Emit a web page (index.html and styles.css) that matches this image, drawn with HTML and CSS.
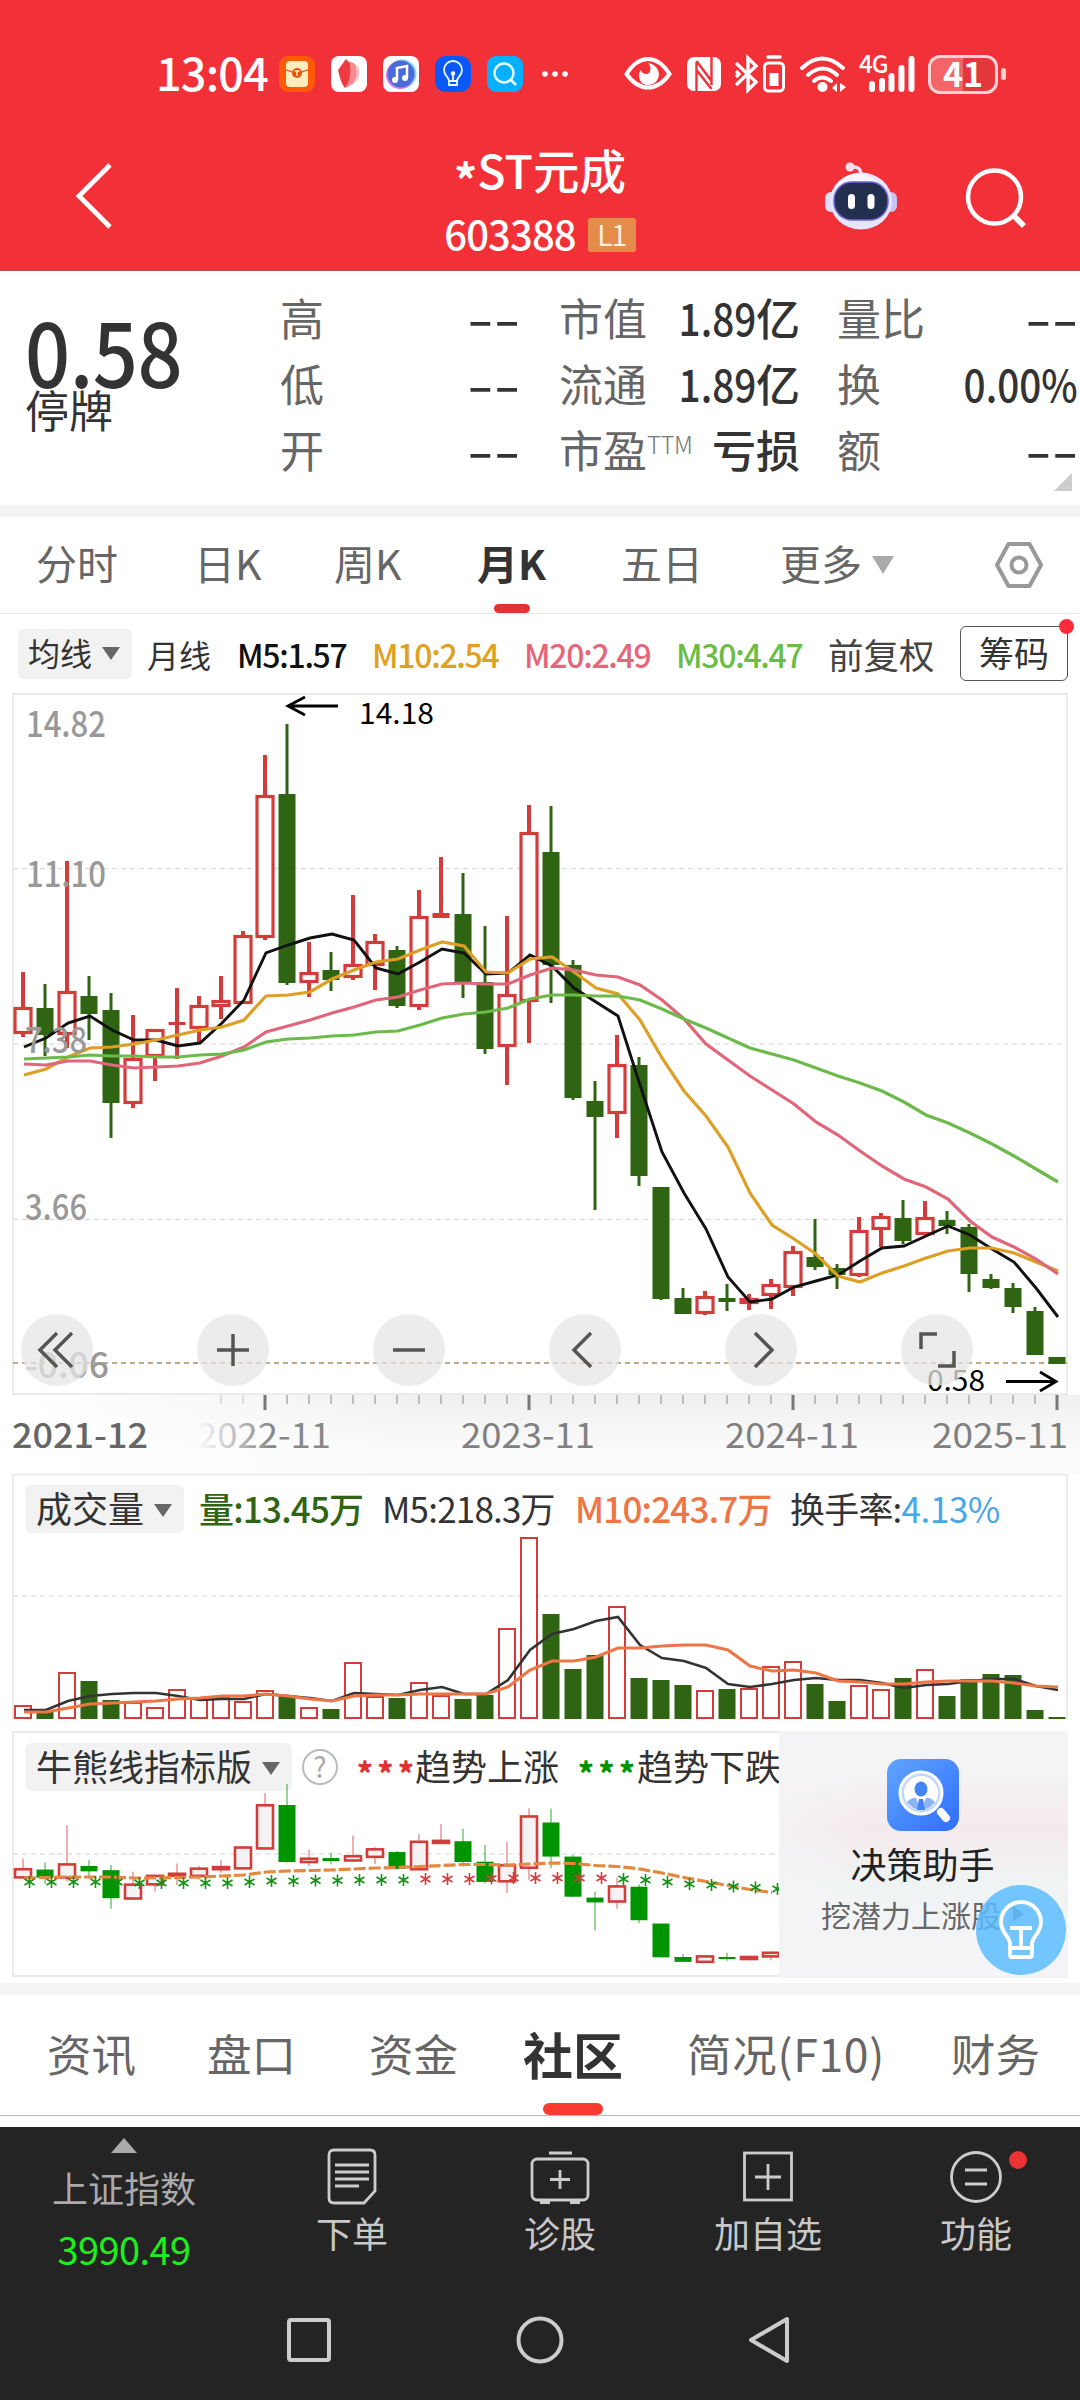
FILE: index.html
```html
<!DOCTYPE html>
<html lang="zh-CN">
<head>
    <meta charset="UTF-8">
    <title>*ST元成 603388</title>
    <link rel="stylesheet" href="styles.css">
</head>
<body>
    <!-- barre d'état + titre -->
    <header class="header">
        <div class="status">
            <span class="time">13:04</span>
            <div class="apps">
                <svg width="36" height="36" viewBox="0 0 36 36">
                    <rect width="36" height="36" rx="9" fill="#ff5a0a"/>
                    <rect x="7" y="5" width="22" height="26" rx="4" fill="#ffeebb"/>
                    <path d="M7 14c5 1 7 3 11 3s6-2 11-3" fill="none" stroke="#e8641c" stroke-width="1.5"/>
                    <circle cx="18" cy="17" r="5" fill="#e8520c"/>
                    <path d="M15.500 15h5M18 15v5" stroke="#ffeebb" stroke-width="1.500"/>
                </svg>
                <svg width="36" height="36" viewBox="0 0 36 36">
                    <rect width="36" height="36" rx="8" fill="#fff"/>
                    <path d="M22 7l5 3q6 16-13 22l-2-20z" fill="#fcc9cb"/>
                    <path d="M18 5l6 3q6 18-10 24l-3-20z" fill="#f88b90"/>
                    <path d="M15 3l4 5q2 14-5 24-4-4-7-18z" fill="#ee3b42"/>
                </svg>
                <svg width="36" height="36" viewBox="0 0 36 36">
                    <rect width="36" height="36" rx="8" fill="#fff"/>
                    <circle cx="19" cy="18" r="14.500" fill="#7fd7f5"/>
                    <circle cx="17" cy="19" r="14" fill="#e07ae6"/>
                    <circle cx="18" cy="18" r="13.500" fill="#4b6bd8"/>
                    <path d="M14 24V12l10-2v12" fill="none" stroke="#fff" stroke-width="2.500"/>
                    <circle cx="12" cy="24" r="3" fill="#fff"/><circle cx="22" cy="22" r="3" fill="#fff"/>
                </svg>
                <svg width="36" height="36" viewBox="0 0 36 36">
                    <rect width="36" height="36" rx="11" fill="#0a58f5"/>
                    <path d="M14 25c0-4-5-5-5-11a9 9 0 0 1 18 0c0 6-5 7-5 11zM14 25v4h8v-4M18 25v-7" fill="none" stroke="#e8fbff" stroke-width="1.800"/>
                    <circle cx="18" cy="17.500" r="2.200" fill="#fff"/>
                </svg>
                <svg width="36" height="36" viewBox="0 0 36 36">
                    <rect width="36" height="36" rx="9" fill="#07b0ff"/>
                    <circle cx="17" cy="17" r="9.500" fill="none" stroke="#e8ffff" stroke-width="2.400"/>
                    <path d="M24 24l5 5" stroke="#e8ffff" stroke-width="2.600"/>
                </svg>
            </div>
            <svg class="more" width="28" height="8" viewBox="0 0 28 8" fill="#fff">
                <circle cx="4" cy="4" r="2.800"/><circle cx="14" cy="4" r="2.800"/><circle cx="24" cy="4" r="2.800"/>
            </svg>
            <svg class="eye" width="48" height="36" viewBox="0 0 48 36">
                <path d="M2.500 18Q12 3 24 3t21.500 15Q36 31.500 24 31.500T2.500 18z" fill="none" stroke="#fff" stroke-width="4"/>
                <path d="M24 7c4 4 3 10-1 11-4 0-6-2-6-4-4 4-2 15 7 15 13 0 16-19 0-22z" fill="#fff"/>
            </svg>
            <svg class="nfc" width="34" height="36" viewBox="0 0 34 36">
                <rect y="1" width="34" height="34" rx="7" fill="#fff"/>
                <path d="M9.500 6v29M24.500 1v28M9.500 5L24.500 25M9.500 14L24.500 33" stroke="#f23037" stroke-width="2.400"/>
            </svg>
            <svg class="bt" width="51" height="38" viewBox="0 0 51 38" fill="none" stroke="#fff" stroke-width="3.400">
                <path d="M1 8l20 19-8 8V3l8 8L1 30M1 16l3 3-3 3"/>
                <rect x="29.500" y="8" width="19" height="28" rx="4" stroke-width="3"/>
                <path d="M33 2h12" stroke-linecap="round"/>
                <rect x="34.500" y="18" width="9" height="13" fill="#fff" stroke="none"/>
            </svg>
            <svg class="wifi" width="48" height="38" viewBox="0 0 48 38" fill="none" stroke="#fff" stroke-width="4" stroke-linecap="round">
                <path d="M3 13q20-19 41 0M9 20q15-13 29 0M15 26q8-7 17 0"/>
                <circle cx="23.500" cy="32" r="5" fill="#fff" stroke="none"/>
                <path d="M38 28v9l-5-4zM41 28v9l6-5z" fill="#fff" stroke="none"/>
            </svg>
            <div class="signal">
                <span class="net">4G</span>
                <svg width="48" height="38" viewBox="0 0 48 38" stroke="#fff" stroke-width="6" stroke-linecap="round">
                    <path d="M5 29v5M15 26v8M24.500 21v13M34.500 13v21M44.500 4v30"/>
                </svg>
            </div>
            <div class="battery">41</div>
            <div class="nub"></div>
        </div>
        <div class="titlebar">
            <svg class="back" width="38" height="66" viewBox="0 0 38 66">
                <path d="M35 2L4 33l31 31" fill="none" stroke="#fff" stroke-width="4.800"/>
            </svg>
            <div class="stock">
                <div class="name"><span class="star">*</span>ST元成</div>
                <div class="code"><span class="number">603388</span><span class="level">L1</span></div>
            </div>
            <svg class="robot" width="74" height="68" viewBox="0 0 74 68">
                <path d="M28 5q9-1 9 8" fill="none" stroke="#eadcf5" stroke-width="3.500"/>
                <circle cx="26" cy="5" r="4.500" fill="#f5dfee"/>
                <rect x="1" y="30" width="12" height="20" rx="6" fill="#dedcf8"/>
                <rect x="61" y="30" width="12" height="20" rx="6" fill="#c9c4f2"/>
                <ellipse cx="37" cy="39" rx="31" ry="28.500" fill="#e6e6fb"/>
                <ellipse cx="34" cy="32" rx="24" ry="20" fill="#f8f4fc"/>
                <rect x="10" y="20" width="54" height="38" rx="18" fill="#242f50" stroke="#6f66d8" stroke-width="1.500"/>
                <rect x="24" y="32" width="7" height="15" rx="3.500" fill="#fff"/>
                <rect x="43.500" y="32" width="7" height="15" rx="3.500" fill="#fff"/>
            </svg>
            <svg class="search" width="62" height="62" viewBox="0 0 62 62" fill="none" stroke="#fff">
                <circle cx="29.500" cy="30" r="26.500" stroke-width="4.500"/>
                <path d="M48.500 48.500L59 59" stroke-width="5.500"/>
            </svg>
        </div>
    </header>

    <section class="quote">
        <div class="price">
            <div class="last">0.58</div>
            <div class="state">停牌</div>
        </div>
        <div class="fields">
            <span>高</span><b><i class="dash">--</i></b><span>市值</span><b><i class="narrow">1.89</i>亿</b><span>量比</span><b><i class="dash">--</i></b>
            <span>低</span><b><i class="dash">--</i></b><span>流通</span><b><i class="narrow">1.89</i>亿</b><span>换</span><b><i class="narrow">0.00%</i></b>
            <span>开</span><b><i class="dash">--</i></b><span>市盈<small>TTM</small></span><b>亏损</b><span>额</span><b><i class="dash">--</i></b>
        </div>
        <div class="corner"></div>
    </section>

    <nav class="periods">
        <a>分时</a><a>日K</a><a>周K</a><a class="active">月K</a><a>五日</a>
        <a>更多<i class="caret big"></i></a>
        <svg width="50" height="48" viewBox="0 0 50 48" fill="none" stroke="#999" stroke-width="4">
            <path d="M14.500 3h21L47 24 35.500 45h-21L3 24z" stroke-linejoin="round"/>
            <circle cx="25" cy="24" r="7.500"/>
        </svg>
    </nav>

    <div class="legend">
        <span class="chip">均线<i class="caret"></i></span>
        <span>月线</span>
        <span class="ma m5">M5:1.57</span>
        <span class="ma m10">M10:2.54</span>
        <span class="ma m20">M20:2.49</span>
        <span class="ma m30">M30:4.47</span>
        <span class="adjust">前复权</span>
        <span class="chips">筹码</span>
    </div>

    <!-- graphique des prix -->
    <section class="kline">
        <svg id="kline" width="1080" height="702" viewBox="0 693 1080 702"></svg>
        <div class="tools">
            <button><svg width="40" height="40" viewBox="0 0 40 40"><path d="M20 3L3 20l17 17M35 3L18 20l17 17"/></svg></button>
            <button><svg width="40" height="40" viewBox="0 0 40 40"><path d="M20 4v32M4 20h32"/></svg></button>
            <button><svg width="40" height="40" viewBox="0 0 40 40"><path d="M4 20h32"/></svg></button>
            <button><svg width="40" height="40" viewBox="0 0 40 40"><path d="M26 3L9 20l17 17"/></svg></button>
            <button><svg width="40" height="40" viewBox="0 0 40 40"><path d="M14 3l17 17-17 17"/></svg></button>
            <button><svg width="40" height="40" viewBox="0 0 40 40"><path d="M4 19V4h16M37 21v15H21"/></svg></button>
        </div>
    </section>

    <section class="axis">
        <svg id="axis" width="1080" height="79" viewBox="0 1395 1080 79"></svg>
    </section>

    <!-- volume -->
    <section class="volume">
        <svg id="volume" class="layer" width="1080" height="257" viewBox="0 1474 1080 257"></svg>
        <div class="volume-head">
            <span class="chip">成交量<i class="caret"></i></span>
            <span class="green">量:13.45万</span>
            <span>M5:218.3万</span>
            <span class="orange">M10:243.7万</span>
            <span>换手率:<em>4.13%</em></span>
        </div>
    </section>

    <!-- indicateur -->
    <section class="trend">
        <div class="trend-head">
            <span class="chip">牛熊线指标版<i class="caret"></i></span>
            <span class="help">?</span>
            <span class="stars red">***</span><span>趋势上涨</span>
            <span class="stars lime">***</span><span>趋势下跌</span>
        </div>
        <svg id="trend" class="layer" width="1080" height="252" viewBox="0 1731 1080 252"></svg>
        <div class="helper">
            <svg width="72" height="72" viewBox="0 0 72 72">
                <defs>
                    <linearGradient id="blue" x1="0" y1="0" x2="1" y2="1">
                        <stop offset="0" stop-color="#61a6ff"/><stop offset="1" stop-color="#2e6dff"/>
                    </linearGradient>
                </defs>
                <rect width="72" height="72" rx="14" fill="url(#blue)"/>
                <circle cx="34" cy="34" r="21" fill="#c3d8fb" stroke="#fff" stroke-width="3"/>
                <circle cx="34" cy="34" r="17" fill="#fff"/>
                <path d="M20 43q5-5 9-4l5 12q-9-1-14-8zM48 43q-5-5-9-4l-5 12q9-1 14-8z" fill="#8fb4f5"/>
                <ellipse cx="34" cy="30" rx="6.500" ry="7.500" fill="#4385f5"/>
                <path d="M32 40h4l2 11h-8z" fill="#4385f5"/>
                <path d="M54 53l5 6" stroke="#fff" stroke-width="8" stroke-linecap="round"/>
            </svg>
            <div class="helper-title">决策助手</div>
            <div class="helper-text">挖潜力上涨股<i></i></div>
        </div>
        <div class="bulb">
            <svg width="46" height="60" viewBox="0 0 46 60" fill="none" stroke="#fff" stroke-width="3.800">
                <path d="M12 55V43C11 36 3 33 3 22a20 20 0 0 1 40 0c0 11-8 14-9 21v12q0 2-2 2H14q-2 0-2-2zM12 48h22M12 28h22M23 28v20" stroke-linejoin="round"/>
            </svg>
        </div>
    </section>

    <nav class="tabs">
        <a>资讯</a><a>盘口</a><a>资金</a><a class="active">社区</a><a class="f10">简况(F10)</a><a>财务</a>
    </nav>

    <footer class="footer">
        <div class="toolbar">
            <div class="index">
                <i class="up"></i>
                <span>上证指数</span>
                <strong>3990.49</strong>
            </div>
            <div class="item">
                <svg width="60" height="60" viewBox="0 0 60 60">
                    <path d="M12 3h36q5 0 5 5v36l-11 12H12q-5 0-5-5V8q0-5 5-5z"/>
                    <path d="M13 18h34M13 25h34M13 32h34M13 39h24"/>
                </svg>
                <span>下单</span>
            </div>
            <div class="item">
                <svg width="60" height="60" viewBox="0 0 60 60">
                    <rect x="2" y="12" width="56" height="41" rx="5"/>
                    <path d="M19 6h23M30 23v19M20 32.500h20M10 55.500h10M40 55.500h10"/>
                </svg>
                <span>诊股</span>
            </div>
            <div class="item">
                <svg width="60" height="60" viewBox="0 0 60 60">
                    <rect x="6.500" y="6" width="47" height="47"/>
                    <path d="M30 17v26M17 30h26"/>
                </svg>
                <span>加自选</span>
            </div>
            <div class="item">
                <svg width="60" height="60" viewBox="0 0 60 60">
                    <circle cx="30" cy="30" r="24.500"/>
                    <path d="M19 23h22M19 37h22"/>
                </svg>
                <span>功能</span>
                <i class="dot"></i>
            </div>
        </div>
        <div class="system">
            <svg width="50" height="50" viewBox="0 0 50 50"><rect x="5" y="5" width="40" height="40" rx="2"/></svg>
            <svg width="50" height="50" viewBox="0 0 50 50"><circle cx="25" cy="25" r="21.500"/></svg>
            <svg width="50" height="50" viewBox="0 0 50 50"><path d="M41 4v42L5 25z" stroke-linejoin="round"/></svg>
        </div>
    </footer>

    <script src="script.js"></script>
</body>
</html>
```
FILE: styles.css
```css
body {
    margin: 0;
    width: 1080px;
    height: 2400px;
    overflow: hidden;
    background-color: #fff;
    color: #333;
    font-family: "Noto Sans CJK SC", sans-serif;
    line-height: 1;
}

i, em {
    font-style: normal;
}

svg {
    display: block;
    flex-shrink: 0;
    overflow: visible;
}

/* En-tête rouge */
.header {
    height: 270px;
    background-color: #f23037;
    border-bottom: 1px solid #b5494e;
    color: #fff;
}

.status {
    display: flex;
    align-items: center;
    height: 148px;
    box-sizing: border-box;
    padding-left: 156px;
}

.time {
    width: 123px;
    padding-bottom: 6px;
    font-size: 45px;
    font-weight: 500;
    letter-spacing: -0.8px;
}

.apps {
    display: flex;
    gap: 16px;
}

.more {
    margin-left: 18px;
}

.eye {
    margin-left: 55px;
}

.nfc {
    margin-left: 15px;
}

.bt {
    margin-left: 14px;
}

.wifi {
    margin-left: 13px;
}

.signal {
    position: relative;
    margin-left: 20px;
}

.net {
    position: absolute;
    left: -8px;
    top: -4px;
    font-size: 24px;
    font-weight: 500;
    letter-spacing: -1px;
}

.battery {
    width: 70px;
    height: 39px;
    margin-left: 13px;
    box-sizing: border-box;
    border: 3px solid #fbd3d5;
    border-radius: 12px;
    background: linear-gradient(90deg, #f4656a 50%, #e2373d 50%);
    font-size: 34px;
    font-weight: 700;
    line-height: 30px;
    text-align: center;
}

.nub {
    width: 5px;
    height: 12px;
    margin-left: 3px;
    border-radius: 3px;
    background-color: #fbd3d5;
}

.titlebar {
    display: flex;
    align-items: flex-start;
    height: 122px;
}

.back {
    margin: 15px 0 0 75px;
}

.stock {
    width: 560px;
    margin-left: 147px;
    text-align: center;
}

.name {
    height: 48px;
    font-size: 46.5px;
    font-weight: 500;
    line-height: 41px;
}

.star {
    display: inline-block;
    font-size: 46px;
    font-weight: 700;
    transform: translateY(9px);
}

.code {
    display: flex;
    justify-content: center;
    align-items: center;
    margin-top: 22px;
    height: 34px;
    font-size: 40px;
    font-weight: 500;
    letter-spacing: -0.9px;
}

.number {
    padding-bottom: 5px;
}

.level {
    width: 48px;
    height: 34px;
    margin-left: 12px;
    border-radius: 3px;
    background-color: #e58c4a;
    color: #fff0e0;
    font-size: 28px;
    font-weight: 400;
    line-height: 32px;
}

.robot {
    margin: 14px 0 0 4px;
}

.search {
    margin: 19px 0 0 67px;
}

/* Cotation */
.quote {
    position: relative;
    display: flex;
    height: 234px;
    border-bottom: 12px solid #f4f4f4;
}

.price {
    width: 280px;
    box-sizing: border-box;
    padding: 41px 0 0 25px;
}

.last {
    font-size: 88px;
    font-weight: 500;
    line-height: 75px;
    transform: scaleX(0.9);
    transform-origin: left;
    letter-spacing: -0.5px;
}

.state {
    font-size: 44px;
    line-height: 44px;
}

.fields {
    display: grid;
    grid-template-columns: 100px 139px 141px 139px 118px 160px;
    grid-auto-rows: 66px;
    padding-top: 13px;
    align-items: center;
    font-size: 44px;
    white-space: nowrap;
}

.fields span {
    color: #666;
}

.fields span:nth-of-type(3n+2) {
    padding-left: 40px;
}

.fields span:nth-of-type(3n) {
    padding-left: 38px;
}

.fields b {
    font-weight: 500;
    text-align: right;
    margin-right: -1px;
}

.fields small {
    color: #777;
    font-size: 24px;
    font-weight: 300;
    vertical-align: 14px;
    letter-spacing: -0.5px;
}

.narrow {
    display: inline-block;
    transform: scaleX(0.88);
    transform-origin: right;
}

.dash {
    display: inline-block;
    transform: scaleX(1.7);
    transform-origin: right;
}

.corner {
    position: absolute;
    right: 8px;
    bottom: 14px;
    border-left: 18px solid transparent;
    border-bottom: 18px solid #ccc;
}

/* Onglets des périodes */
.periods {
    display: grid;
    grid-template-columns: 158px 140px 143px 144px 159px 214px 50px;
    align-items: center;
    height: 96px;
    padding-left: 36px;
    border-bottom: 1px solid #e6e6e6;
    color: #666;
    font-size: 41px;
    white-space: nowrap;
}

.periods a {
    position: relative;
    justify-self: start;
    line-height: 91px;
    height: 96px;
}

.periods .active {
    color: #333;
    font-weight: 700;
}

.periods .active::after {
    content: "";
    position: absolute;
    left: 50%;
    bottom: 0;
    width: 36px;
    height: 9px;
    margin-left: -18px;
    border-radius: 5px;
    background-color: #e23232;
}

.caret {
    display: inline-block;
    margin-left: 10px;
    vertical-align: 6px;
    border: 9px solid transparent;
    border-top: 13px solid #666;
    border-bottom: none;
}

.caret.big {
    border-width: 18px 11px 0;
    border-top-color: #aaa;
}

.legend {
    display: grid;
    grid-template-columns: 129px 90px 135px 152px 152px 152px 132px 108px;
    align-items: center;
    height: 79px;
    padding-left: 18px;
    font-size: 32px;
    white-space: nowrap;
}

.chip {
    justify-self: start;
    padding: 0 10px;
    border-radius: 6px;
    background-color: #f2f2f2;
}

.legend .chip {
    box-sizing: border-box;
    width: 114px;
    height: 50px;
    line-height: 47px;
}

.ma {
    font-weight: 500;
    letter-spacing: -1.3px;
}

.m5 {
    color: #111;
}

.m10 {
    color: #e0a020;
}

.m20 {
    color: #e5667a;
}

.m30 {
    color: #6abd45;
}

.adjust {
    font-size: 35.5px;
    color: #444;
}

.chips {
    position: relative;
    box-sizing: border-box;
    width: 108px;
    height: 55px;
    border: 1px solid #555;
    border-radius: 6px;
    font-size: 35px;
    line-height: 50px;
    text-align: center;
}

.chips::after {
    content: "";
    position: absolute;
    right: -7px;
    top: -8px;
    width: 15px;
    height: 15px;
    border-radius: 50%;
    background-color: #ff2a3c;
}

/* Graphiques */
.kline {
    position: relative;
    height: 702px;
}

.tools {
    position: absolute;
    left: 21px;
    bottom: 9px;
    display: flex;
    gap: 104px;
}

.tools button {
    display: flex;
    align-items: center;
    justify-content: center;
    width: 72px;
    height: 72px;
    padding: 0;
    border: none;
    border-radius: 50%;
    background-color: rgba(229, 229, 229, 0.75);
}

.tools path {
    fill: none;
    stroke: #555;
    stroke-width: 3.5;
}

.axis {
    height: 79px;
    background: linear-gradient(90deg, #fff 30px, rgba(255, 255, 255, 0) 420px), linear-gradient(#f0f0f0, #fbfbfb 75%);
}

.volume {
    position: relative;
    height: 257px;
}

.layer {
    position: absolute;
    left: 0;
    top: 0;
}

.volume-head {
    position: relative;
    display: grid;
    grid-template-columns: 174px 183px 193px 215px auto;
    padding: 11px 0 0 25px;
    font-size: 35px;
    line-height: 45px;
    letter-spacing: -0.8px;
    white-space: nowrap;
}

.volume-head .chip,
.trend-head .chip {
    height: 48px;
    font-size: 36px;
    line-height: 45px;
    padding: 0 12px 0 11px;
    letter-spacing: 0;
}

.volume-head em {
    color: #45a6e8;
    letter-spacing: -0.4px;
}

.green {
    color: #2f6512;
}

.orange {
    color: #ee7545;
}

.volume-head .green,
.volume-head .orange {
    font-weight: 500;
}

.trend {
    position: relative;
    height: 252px;
    border-bottom: 12px solid #f4f4f4;
}

.trend-head {
    display: grid;
    grid-template-columns: 276px 56px 58px 163px 59px 142px;
    width: 754px;
    overflow: hidden;
    padding: 12px 0 0 25px;
    font-size: 36px;
    line-height: 45px;
    white-space: nowrap;
}

.help {
    width: 32px;
    height: 32px;
    margin: 6px 0 0 1px;
    border: 2px solid #bbb;
    border-radius: 50%;
    color: #aaa;
    font-size: 28px;
    line-height: 30px;
    text-align: center;
}

.stars {
    padding-top: 7px;
    height: 41px;
    letter-spacing: 4.6px;
    font-weight: 900;
    font-size: 30px;
}

.red {
    color: #e03232;
}

.lime {
    color: #009500;
}

.helper {
    position: absolute;
    left: 779px;
    top: 0;
    display: flex;
    flex-direction: column;
    align-items: center;
    width: 289px;
    height: 247px;
    box-sizing: border-box;
    padding: 28px 2px 0 0;
    background: linear-gradient(90deg, rgba(244, 244, 246, 0.7), rgba(244, 244, 246, 0.1) 30%), linear-gradient(#f4f4f5 15%, #f4e9ec 40%, #eff3f3 62%, #f4f4f7 85%);
}

.helper-title {
    margin-top: 14px;
    color: #222;
    font-size: 36px;
    line-height: 36px;
}

.helper-text {
    display: flex;
    align-items: center;
    margin-top: 18px;
    color: #666;
    font-size: 30px;
    line-height: 30px;
}

.helper-text i {
    margin-left: 12px;
    border: 8px solid transparent;
    border-left: 11px solid #777;
    border-right: none;
}

.bulb {
    position: absolute;
    left: 976px;
    top: 154px;
    display: flex;
    align-items: center;
    justify-content: center;
    width: 90px;
    height: 90px;
    border-radius: 50%;
    background-color: rgba(92, 188, 255, 0.85);
}

/* Onglets du bas */
.tabs {
    display: grid;
    grid-template-columns: 160px 162px 154px 164px 264px auto;
    height: 120px;
    padding-left: 47px;
    margin-bottom: 11px;
    border-bottom: 1px solid #bbb;
    color: #666;
    font-size: 44.5px;
    line-height: 116px;
    white-space: nowrap;
}

.tabs a {
    position: relative;
    justify-self: start;
}

.tabs .active {
    color: #333;
    font-size: 50px;
    font-weight: 700;
}

.tabs .active::after {
    content: "";
    position: absolute;
    left: 50%;
    bottom: 0;
    width: 60px;
    height: 12px;
    margin-left: -30px;
    border-radius: 6px;
    background-color: #fb3b30;
}

.f10 {
    letter-spacing: 0.7px;
}

/* Barre du bas */
.footer {
    height: 273px;
    background-color: #242424;
    color: #c8c8c8;
}

.toolbar {
    display: grid;
    grid-template-columns: 248px 208px 208px 208px 208px;
    height: 170px;
    font-size: 36px;
    line-height: 36px;
}

.index {
    display: flex;
    flex-direction: column;
    align-items: center;
    padding-top: 11px;
    color: #aaa;
}

.index span {
    margin-top: 16px;
}

.index strong {
    margin-top: 26px;
    color: #1cf01c;
    font-size: 38px;
    font-weight: 400;
    letter-spacing: -0.6px;
}

.up {
    border: 13px solid transparent;
    border-bottom: 15px solid #aaa;
    border-top: none;
}

.item {
    position: relative;
    display: flex;
    flex-direction: column;
    align-items: center;
    padding-top: 20px;
}

.item span {
    margin-top: 7px;
}

.item svg,
.system svg {
    fill: none;
    stroke: #ccc;
    stroke-width: 2.8;
}

.dot {
    position: absolute;
    left: 137px;
    top: 24px;
    width: 18px;
    height: 18px;
    border-radius: 50%;
    background-color: #ea3333;
}

.system {
    display: flex;
    justify-content: center;
    gap: 181px;
    padding-top: 18px;
}

.system svg {
    stroke-width: 4;
}
```
FILE: script.js
```js
const NS = "http://www.w3.org/2000/svg";
const UP = "#d43c3c";
const DOWN = "#2f6512";

// sens, haut, haut du corps, bas du corps, bas
const candles = [
    ["r", 972, 1007, 1034, 1037], ["g", 984, 1008, 1035, 1056], ["r", 861, 991, 1035, 1048],
    ["g", 976, 996, 1014, 1040], ["g", 993, 1010, 1103, 1138], ["r", 1015, 1058, 1104, 1108],
    ["r", 1029, 1029, 1057, 1081], ["r", 988, 1022, 1025, 1059], ["r", 996, 1005, 1029, 1042],
    ["r", 976, 1000, 1007, 1019], ["r", 931, 935, 1004, 1004], ["r", 755, 795, 938, 940],
    ["g", 724, 794, 983, 985], ["r", 942, 972, 983, 997], ["g", 952, 970, 980, 991],
    ["r", 895, 964, 978, 980], ["r", 934, 941, 966, 990], ["g", 946, 950, 1006, 1008],
    ["r", 890, 916, 1007, 1010], ["r", 857, 913, 918, 918], ["g", 873, 914, 983, 998],
    ["g", 926, 982, 1049, 1054], ["r", 916, 994, 1047, 1085], ["r", 805, 832, 1002, 1043],
    ["g", 806, 852, 965, 1003], ["g", 960, 965, 1098, 1100], ["g", 1081, 1101, 1117, 1210],
    ["r", 1035, 1064, 1114, 1138], ["g", 1057, 1065, 1176, 1186], ["g", 1187, 1187, 1299, 1300],
    ["g", 1288, 1298, 1314, 1314], ["r", 1291, 1296, 1314, 1315], ["g", 1284, 1298, 1302, 1311],
    ["r", 1294, 1298, 1304, 1310], ["r", 1279, 1284, 1296, 1309], ["r", 1246, 1251, 1288, 1296],
    ["g", 1219, 1257, 1267, 1270], ["g", 1264, 1268, 1275, 1289], ["r", 1217, 1230, 1276, 1277],
    ["r", 1213, 1216, 1230, 1247], ["g", 1200, 1218, 1241, 1244], ["r", 1201, 1217, 1235, 1235],
    ["g", 1211, 1220, 1226, 1234], ["g", 1224, 1227, 1274, 1292], ["g", 1274, 1279, 1288, 1289],
    ["g", 1283, 1288, 1307, 1313], ["g", 1307, 1311, 1355, 1355], ["g", 1357, 1357, 1364, 1364]
];

const ma5 = [1047, 1038, 1023, 1016, 1030, 1040, 1040, 1046, 1043, 1023, 1000, 953, 945, 938, 934, 940, 968, 974, 962, 949, 953, 974, 973, 955, 966, 988, 1002, 1016, 1085, 1152, 1193, 1229, 1277, 1302, 1299, 1287, 1281, 1275, 1261, 1248, 1246, 1236, 1226, 1235, 1249, 1262, 1288, 1317];
const ma10 = [1075, 1069, 1057, 1048, 1047, 1044, 1040, 1035, 1030, 1027, 1020, 996, 995, 992, 979, 970, 962, 959, 950, 942, 946, 972, 973, 959, 957, 972, 988, 994, 1020, 1058, 1091, 1116, 1147, 1193, 1225, 1239, 1254, 1276, 1282, 1273, 1266, 1258, 1251, 1248, 1248, 1253, 1262, 1271];
const ma20 = [1064, 1065, 1061, 1061, 1065, 1068, 1067, 1066, 1063, 1056, 1047, 1032, 1026, 1020, 1013, 1007, 1000, 997, 990, 984, 983, 984, 984, 975, 968, 970, 975, 977, 985, 1000, 1019, 1044, 1060, 1076, 1090, 1104, 1122, 1135, 1151, 1166, 1179, 1187, 1199, 1221, 1237, 1247, 1259, 1274];
const ma30 = [1059, 1058, 1057, 1055, 1056, 1056, 1057, 1057, 1055, 1054, 1050, 1042, 1039, 1038, 1036, 1035, 1032, 1031, 1025, 1018, 1014, 1012, 1008, 999, 995, 995, 996, 996, 1000, 1009, 1019, 1028, 1038, 1048, 1054, 1060, 1068, 1076, 1083, 1091, 1102, 1115, 1123, 1133, 1144, 1156, 1169, 1182];

const volumes = [13, 7, 46, 38, 19, 16, 11, 29, 21, 22, 17, 28, 23, 11, 10, 56, 22, 21, 36, 23, 20, 24, 90, 181, 105, 50, 64, 112, 41, 39, 34, 28, 30, 30, 52, 57, 35, 18, 33, 29, 41, 49, 23, 40, 45, 44, 9, 2];
const vma5 = [1710, 1710, 1701, 1696, 1694, 1693, 1693, 1696, 1700, 1699, 1699, 1694, 1696, 1698, 1701, 1693, 1694, 1695, 1690, 1687, 1694, 1694, 1680, 1650, 1634, 1629, 1621, 1617, 1645, 1658, 1661, 1668, 1684, 1687, 1684, 1680, 1678, 1680, 1680, 1683, 1688, 1685, 1684, 1681, 1679, 1679, 1686, 1690];
const vma10 = [1712, 1712, 1708, 1704, 1703, 1702, 1701, 1699, 1698, 1696, 1696, 1694, 1696, 1699, 1701, 1696, 1695, 1695, 1694, 1694, 1694, 1694, 1687, 1670, 1661, 1661, 1657, 1648, 1648, 1646, 1645, 1645, 1650, 1666, 1671, 1670, 1673, 1681, 1682, 1684, 1684, 1682, 1681, 1681, 1681, 1683, 1686, 1687];

const bull = [1878, 1877.5, 1877, 1877, 1877, 1878, 1878, 1877.5, 1877, 1876, 1875, 1872, 1871, 1870.5, 1870, 1869, 1868, 1867.5, 1866.5, 1865.5, 1864.5, 1864.5, 1865, 1864, 1863, 1863.5, 1865.5, 1866.5, 1869, 1873, 1877.5, 1881.5, 1885.5, 1889.5, 1892.5];
const marks = [1882, 1882, 1882, 1882, 1882, 1883, 1883, 1883, 1883, 1883, 1882, 1881, 1881, 1880.5, 1880.5, 1880, 1880, 1880, 1879, 1879, 1879, 1878.5, 1878, 1878, 1878, 1878, 1878, 1879, 1880, 1882, 1884, 1885, 1886.5, 1887.5, 1889];

function x(i) {
    return 23 + i * 22;
}

function add(svg, tag, attrs, text) {
    const el = document.createElementNS(NS, tag);
    for (const key in attrs) {
        el.setAttribute(key, attrs[key]);
    }
    if (text) {
        el.textContent = text;
    }
    svg.appendChild(el);
}

function hline(svg, y, color, dash, width) {
    add(svg, "path", { d: "M13 " + y + "H1067", stroke: color, "stroke-width": width || 1.5, "stroke-dasharray": dash });
}

function curve(svg, ys, color, width, dash) {
    const points = ys.map((y, i) => (x(i) + 1) + "," + y).join(" ");
    add(svg, "polyline", { points: points, fill: "none", stroke: color, "stroke-width": width, "stroke-dasharray": dash || "none" });
}

function label(svg, text, left, baseline, width, size, color, weight) {
    add(svg, "text", { x: left, y: baseline, "font-size": size, fill: color, "font-weight": weight || 400, textLength: width, lengthAdjust: "spacingAndGlyphs" }, text);
}

function drawKline() {
    const svg = document.getElementById("kline");
    add(svg, "rect", { x: 13, y: 694, width: 1054, height: 700, fill: "none", stroke: "#ebebeb", "stroke-width": 2 });
    hline(svg, 868.5, "#ddd", "5 4");
    hline(svg, 1044, "#e8e8e8", "5 4", 2);
    hline(svg, 1219.5, "#ddd", "5 4");
    hline(svg, 1363, "#c4a882", "5 4", 2);

    candles.forEach(([dir, high, top, bottom, low], i) => {
        const color = dir == "r" ? UP : DOWN;
        const w = dir == "r" ? 4 : 3;
        add(svg, "path", { d: "M" + x(i) + " " + high + "V" + top + "M" + x(i) + " " + bottom + "V" + low, stroke: color, "stroke-width": w });
        if (dir == "r" && bottom - top > 5) {
            add(svg, "rect", { x: x(i) - 8, y: top + 1.5, width: 16, height: bottom - top - 3, fill: "#fff", stroke: color, "stroke-width": 3.2 });
        } else {
            add(svg, "rect", { x: x(i) - 8.5, y: top, width: 17, height: bottom - top, fill: color });
        }
    });

    curve(svg, ma5, "#111", 2.9);
    curve(svg, ma10, "#dd9f25", 3.2);
    curve(svg, ma20, "#e0667a", 3.2);
    curve(svg, ma30, "#6cba4a", 3.2);

    label(svg, "14.82", 26, 737, 80, 35, "#999", 500);
    label(svg, "11.10", 26, 887, 80, 35, "#999", 500);
    label(svg, "7.38", 25, 1053, 62, 35, "#999", 500);
    label(svg, "3.66", 25, 1220, 62, 35, "#999", 500);
    label(svg, "-0.06", 25, 1378, 84, 35, "#999", 500);

    label(svg, "14.18", 359, 724, 75, 29, "#000");
    label(svg, "0.58", 927, 1391, 58, 29, "#000");
    add(svg, "path", { d: "M338 706H288M305 697L288 706L305 715", fill: "none", stroke: "#000", "stroke-width": 2.8 });
    add(svg, "path", { d: "M1006 1381.500H1056M1040 1372L1056 1381.500L1040 1391", fill: "none", stroke: "#000", "stroke-width": 2.8 });
}

function drawAxis() {
    const svg = document.getElementById("axis");
    for (let i = 9; i < 48; i++) {
        if (i % 12 == 11) {
            add(svg, "path", { d: "M" + x(i) + " 1395V1410", stroke: "#777", "stroke-width": 3 });
        } else {
            add(svg, "path", { d: "M" + x(i) + " 1395V1404", stroke: i < 11 ? "#ccc" : "#999", "stroke-width": 1.2 });
        }
    }
    add(svg, "defs", {});
    svg.lastChild.innerHTML = '<linearGradient id="fade"><stop offset="0" stop-color="#888" stop-opacity="0"/><stop offset="0.55" stop-color="#888"/></linearGradient>';
    label(svg, "2021-12", 12, 1448, 136, 34, "#666", 500);
    label(svg, "2022-11", 197, 1448, 134, 34, "url(#fade)");
    label(svg, "2023-11", 461, 1448, 134, 34, "#808080");
    label(svg, "2024-11", 725, 1448, 134, 34, "#808080");
    label(svg, "2025-11", 932, 1448, 136, 34, "#808080");
}

function drawVolume() {
    const svg = document.getElementById("volume");
    add(svg, "path", { d: "M13 1719V1474.500H1067V1719", fill: "none", stroke: "#ebebeb", "stroke-width": 2 });
    hline(svg, 1596, "#e8e8e8", "5 4", 2);
    volumes.forEach((h, i) => {
        if (candles[i][0] == "r") {
            add(svg, "rect", { x: x(i) - 8, y: 1719 - h, width: 16, height: h - 1, fill: "#fff", stroke: UP, "stroke-width": 2 });
        } else {
            add(svg, "rect", { x: x(i) - 8.5, y: 1719 - h, width: 17, height: h, fill: DOWN });
        }
    });
    curve(svg, vma5, "#333", 2.6);
    curve(svg, vma10, "#ee7545", 3);
}

function drawTrend() {
    const svg = document.getElementById("trend");
    const scale = y => 1805 + (y - 794) * 0.3016;
    add(svg, "rect", { x: 13, y: 1732, width: 1054, height: 244, fill: "none", stroke: "#ebebeb", "stroke-width": 2 });
    hline(svg, 1854, "#e8e8e8", "5 4", 2);
    candles.slice(0, 35).forEach(([dir, high, top, bottom, low], i) => {
        const color = dir == "r" ? "#d43c3c" : "#009400";
        const t = scale(top);
        const h = Math.max(scale(bottom) - t, 2);
        add(svg, "path", { d: "M" + x(i) + " " + scale(high) + "V" + scale(low), stroke: color, "stroke-width": 1, opacity: 0.8 });
        if (dir == "r") {
            add(svg, "rect", { x: x(i) - 8, y: t, width: 16, height: h, fill: "#f4f2f2", stroke: color, "stroke-width": 2.6 });
        } else {
            add(svg, "rect", { x: x(i) - 8.5, y: t, width: 17, height: h, fill: color });
        }
    });
    curve(svg, bull, "#e2893f", 3.2, "12 3");
    marks.forEach((y, i) => {
        const cx = x(i) + 6.5;
        const color = i > 17 && i < 27 ? "#d43c3c" : "#169016";
        add(svg, "path", { d: "M" + cx + " " + (y - 6) + "v12M" + (cx - 5) + " " + (y - 3) + "l10 6M" + (cx - 5) + " " + (y + 3) + "l10 -6", stroke: color, "stroke-width": 1.6 });
    });
}

drawKline();
drawAxis();
drawVolume();
drawTrend();
```
